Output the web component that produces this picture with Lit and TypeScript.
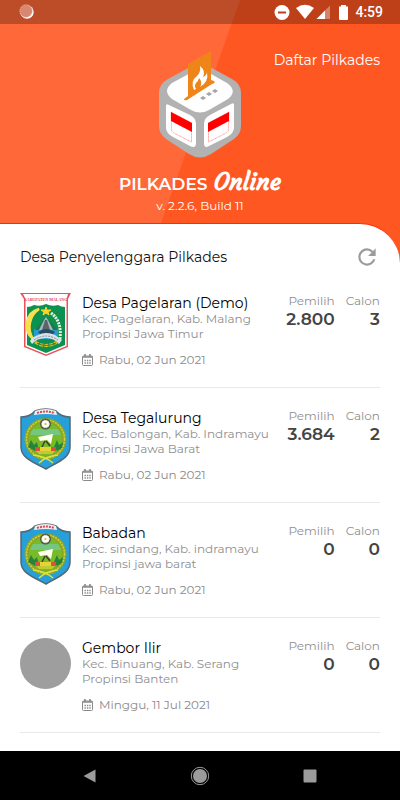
import { LitElement, html, css, svg } from "lit";
import { customElement, property } from "lit/decorators.js";

interface Village {
  name: string;
  district: string;
  province: string;
  date: string;
  voters: string;
  candidates: string;
  crest: "malang" | "indramayu" | "none";
}

const villages: Village[] = [
  { name: "Desa Pagelaran (Demo)", district: "Kec. Pagelaran, Kab. Malang", province: "Propinsi Jawa Timur", date: "Rabu, 02 Jun 2021", voters: "2.800", candidates: "3", crest: "malang" },
  { name: "Desa Tegalurung", district: "Kec. Balongan, Kab. Indramayu", province: "Propinsi Jawa Barat", date: "Rabu, 02 Jun 2021", voters: "3.684", candidates: "2", crest: "indramayu" },
  { name: "Babadan", district: "Kec. sindang, Kab. indramayu", province: "Propinsi jawa barat", date: "Rabu, 02 Jun 2021", voters: "0", candidates: "0", crest: "indramayu" },
  { name: "Gembor Ilir", district: "Kec. Binuang, Kab. Serang", province: "Propinsi Banten", date: "Minggu, 11 Jul 2021", voters: "0", candidates: "0", crest: "none" },
];

const fontStack = css`Montserrat, Inter, "Liberation Sans", sans-serif`;

const malangCrest = svg`
  <path d="M0 0H51L48 6V54L26 63L4 54V6Z" fill="#e8525a"/>
  <path d="M3 1H48L46.500 6V53L26 61.500L5.500 53V6Z" fill="#fff"/>
  <text x="25.500" y="8" text-anchor="middle" font-family="Liberation Serif, serif" font-weight="700" font-size="4" fill="#e0454f">KABUPATEN MALANG</text>
  <path d="M7 14Q11 14 14 12Q20 14 26 11Q32 14 38 12Q41 14 45 14V52L26 60L7 52Z" fill="#0d9150"/>
  <path d="M19 16A16 17 0 0 0 13 46A22 22 0 0 1 19 16Z" fill="#f6e04b" stroke="#f6e04b" stroke-width="2.500"/>
  <path d="M31 20Q42 28 40 46" fill="none" stroke="#e8f3e0" stroke-width="3" stroke-dasharray="2 1"/>
  <path d="M14 36H38V46H14Z" fill="#299bd2"/>
  <path d="M15 37L22 28L26 24L30 28L38 37Z" fill="#197b50"/>
  <path d="M26 24L28 27L33 37H19L24 27Z" fill="#aab9b8"/>
  <path d="M25 27H27L30 37H22Z" fill="#58666b"/>
  <path d="M18 39Q26 33 35 39L33 41H20Z" fill="#294b64"/>
  <path d="M26 14L27 17H31L28 19L29 22L26 20L23 22L24 19L21 17H25Z" fill="#ffd329" stroke="#ffd329"/>
  <path d="M10 48Q12 44 18 42Q26 38 35 42L42 47L39 51Q34 45 26 45Q17 45 12 51Z" fill="#dce2e9"/>
  <path d="M14 47Q26 39 38 47" fill="none" stroke="#858c9c" stroke-width="1" stroke-dasharray="2 1"/>
  <path d="M15 49Q26 56 37 49" fill="none" stroke="#d5bd24" stroke-width="3" stroke-dasharray="4 1"/>
  <path d="M17 50Q26 55 36 50" fill="none" stroke="#55752a" stroke-width="1"/>`;

const indramayuCrest = svg`
  <path d="M1 9Q10 9 15 3Q26 -1 36 3Q41 9 50 9V39C50 50 38 54 26 61C13 54 1 50 1 39Z" fill="#27a0da" stroke="#536775" stroke-width="1.500"/>
  <path d="M15 3Q26 -1 36 3L37 7Q26 5 14 7Z" fill="#edf0f0"/>
  <path d="M17 5Q26 2 34 5" fill="none" stroke="#d94a55" stroke-width="2" stroke-dasharray="2 1"/>
  <circle cx="25.500" cy="31" r="21" fill="#8fa522"/>
  <circle cx="25.500" cy="31" r="19" fill="none" stroke="#cfd23e" stroke-width="1.500" stroke-dasharray="2 1"/>
  <circle cx="25.500" cy="31" r="16.500" fill="#77bb28"/>
  <path d="M13 21H38Q40 24 41 27H10Q11 24 13 21Z" fill="#74c681"/>
  <circle cx="25.500" cy="16" r="5.500" fill="#4d5a45"/>
  <circle cx="25.500" cy="16" r="3.800" fill="#fff" stroke="#dfe4c0" stroke-dasharray="1 1"/>
  <circle cx="25.500" cy="16" r="1.200" fill="#d9c95a"/>
  <path d="M18 29L33 26L31 36L27 32L20 33Z" fill="#fffef0"/>
  <path d="M26 33L30 38M25 33L22 39" stroke="#473d23" stroke-width="1.500"/>
  <path d="M8 39L11 32L14 37L17 34L18 39L15 43ZM34 39L37 32L39 37L43 34L42 40L37 43Z" fill="#24853a"/>
  <path d="M15 39H36V43H15Z" fill="#e9d234"/>
  <path d="M15 39H20V43H15ZM31 39H36V43H31Z" fill="#db513a"/>
  <path d="M16 43H35L32 46H19Z" fill="#b8ce32"/>
  <path d="M13 47Q25 48 33 55M38 47Q26 48 19 55" fill="none" stroke="#dce440" stroke-width="1.500"/>`;

@customElement("village-row")
export class VillageRow extends LitElement {
  @property({ attribute: false }) village!: Village;

  static styles = css`
    :host { display: block; font-family: ${fontStack}; }
    .row { display: flex; gap: 11px; padding-bottom: 19px; border-bottom: 1px solid #e9e9e9; }
    .crest { flex: none; width: 51px; height: 64px; }
    .blank { flex: none; width: 51px; height: 51px; border-radius: 50%; background: #9e9e9e; }
    .info { flex: 1; min-width: 0; white-space: nowrap; }
    .name { margin: 0; padding-top: 2px; font-size: 14px; line-height: 16px; font-weight: 400; color: #000; }
    .place { margin: 0; font-size: 12px; line-height: 15px; color: #8f8f8f; }
    .date { display: flex; align-items: center; gap: 6px; margin: 10px 0 0; font-size: 12px; line-height: 17px; color: #8a8a8a; }
    .date svg { width: 11px; height: 12px; }
    .counts { display: flex; gap: 11px; margin: 0; text-align: right; }
    .label { font-size: 12px; line-height: 16px; color: #8f8f8f; }
    .value { margin: 0; font-size: 17px; line-height: 20px; font-weight: 600; color: #444; }
  `;

  render() {
    const v = this.village;
    return html`<article class="row">
      ${v.crest === "none"
        ? html`<div class="blank"></div>`
        : html`<svg class="crest" viewBox="0 0 51 64" aria-hidden="true">${v.crest === "malang" ? malangCrest : indramayuCrest}</svg>`}
      <div class="info">
        <h3 class="name">${v.name}</h3>
        <p class="place">${v.district}</p>
        <p class="place">${v.province}</p>
        <p class="date">
          <svg viewBox="0 0 11 12" aria-hidden="true">
            <path d="M1.500 2H9.500Q10.500 2 10.500 3V10.500Q10.500 11.500 9.500 11.500H1.500Q.5 11.500 .5 10.500V3Q.5 2 1.500 2Z" fill="none" stroke="#8a8a8a"/>
            <path d="M.5 3H10.500M3 0V2.500M8 0V2.500" fill="none" stroke="#8a8a8a" stroke-width="1.600"/>
            <path d="M2.500 6.500H8.700M2.500 9H8.700" stroke="#8a8a8a" stroke-width="1.400" stroke-dasharray="1.400 1"/>
          </svg>
          <time>${v.date}</time>
        </p>
      </div>
      <dl class="counts">
        <div><dt class="label">Pemilih</dt><dd class="value">${v.voters}</dd></div>
        <div><dt class="label">Calon</dt><dd class="value">${v.candidates}</dd></div>
      </dl>
    </article>`;
  }
}

@customElement("app-root")
export class AppRoot extends LitElement {
  static styles = css`
    :host { display: flex; flex-direction: column; min-height: 100vh; background: #fff; font-family: ${fontStack}; }
    .top { background: #ff5722; position: relative; }
    .shade { position: absolute; inset: 0; width: 100%; height: 100%; }
    .status { position: relative; display: flex; align-items: center; justify-content: space-between; height: 24px; padding: 0 17px 0 19px; background: rgba(0, 0, 0, 0.26); color: #fff; font: 500 14px/24px Roboto, sans-serif; }
    .status svg { display: block; }
    .signals { display: flex; align-items: center; gap: 7px; }
    .hero { position: relative; display: grid; grid-template-columns: 1fr 82px 1fr; padding: 26px 20px 0; }
    .list-link { grid-column: 3; justify-self: end; color: #fff; text-decoration: none; font-size: 14px; line-height: 20px; white-space: nowrap; }
    .logo { grid-column: 2; grid-row: 1; width: 82px; height: 108px; }
    .brand { position: relative; display: flex; justify-content: center; align-items: baseline; gap: 6px; margin: 11px 0 0; color: #fff; font-size: 17px; line-height: 26px; font-weight: 600; }
    .script { font: normal 700 24px/26px Courgette, "Kaushan Script", Pacifico, Lato, cursive; }
    .version { position: relative; margin: 0; padding: 1px 0 9px; color: #fff; text-align: center; font-size: 12px; line-height: 16px; }
    .corner { background: #ff5722; }
    .sheet { padding: 20px 20px 17px; background: #fff; border-radius: 0 40px 0 0; border-top: 1px solid #ff2a06; }
    .bar { display: flex; justify-content: space-between; align-items: center; }
    .heading { margin: 0; font-size: 14px; line-height: 24px; font-weight: 400; color: #111; }
    .refresh { border: 0; padding: 0; background: none; width: 26px; height: 26px; }
    .list { display: grid; gap: 20px; margin: 23px 0 0; padding: 0; list-style: none; }
    .nav { display: flex; justify-content: space-around; align-items: center; height: 49px; margin-top: auto; padding: 0 35px; background: #000; }
    .key { display: block; border: 0; padding: 0; width: 20px; height: 20px; background: none; }
    .key svg, .refresh svg { display: block; width: 100%; height: 100%; }
  `;

  render() {
    return html`
      <header class="top">
        <svg class="shade" viewBox="0 0 400 224" preserveAspectRatio="none" aria-hidden="true">
          <path d="M0 0H240L161 224H0Z" fill="#fff" fill-opacity=".1"/>
        </svg>
        <div class="status">
          <svg width="16" height="16" viewBox="0 0 16 16" aria-hidden="true">
            <circle cx="8" cy="8" r="6.700" fill="#fff"/>
            <circle cx="7" cy="7" r="6.200" fill="#d98770" stroke="#e6b1a2" stroke-dasharray="1 1"/>
          </svg>
          <div class="signals">
            <svg width="76" height="18" viewBox="272 3 76 18" aria-hidden="true">
              <circle cx="282" cy="12.500" r="7.500" fill="#fff"/>
              <path d="M278 11.500H286V13.500H278Z" fill="#b8421d"/>
              <path d="M296 8Q305 1.500 314 8L305 19Z" fill="#fff"/>
              <path d="M330 5.500V19H316.500Z" fill="#fff" fill-opacity=".35"/>
              <path d="M325 10.500V19H316.500Z" fill="#fff"/>
              <path d="M341 5H346V6.500H348V19Q348 20 347 20H340Q339 20 339 19V6.500H341Z" fill="#fff"/>
            </svg>
            <span>4:59</span>
          </div>
        </div>
        <div class="hero">
          <svg class="logo" viewBox="159 50 82 108" role="img" aria-label="Pilkades Online">
            <path d="M192 66Q200 62 208 66L232 79Q241 84 241 93V126Q241 134 234 139L211 154Q200 161 189 154L166 139Q159 134 159 126V93Q159 84 168 79Z" fill="#b2b2b2"/>
            <path d="M196 70Q200 68 204 70L227 83Q238 91 228 99L209 110Q200 115 191 110L172 99Q162 91 172 83Z" fill="#fff"/>
            <path d="M166 106Q166 103 169 105L190 115Q196 118 196 124V143Q196 149 190 146L173 137Q166 133 166 128Z" fill="#fff"/>
            <path d="M234 105Q234 102 231 104L210 115Q204 118 204 124V143Q204 149 209 146L227 137Q234 133 234 128Z" fill="#fff"/>
            <path d="M171 112L191.500 123V142L176 134Q171.500 132 171.500 129Z" fill="#fff" stroke="#ff6b66" stroke-width=".7" stroke-dasharray="1 .5"/>
            <path d="M229 112L208.500 123V142L224 134Q228.500 132 228.500 129Z" fill="#fff" stroke="#ff6b66" stroke-width=".7" stroke-dasharray="1 .5"/>
            <path d="M171 112L192 123V132L171 121ZM229 112L208 123V132L229 121Z" fill="#f00"/>
            <path d="M188 64L211 51V80L214 81Q216 83 212 84L187 100Q184 101 184 99L188 96Z" fill="#ef8519"/>
            <path d="M194 90Q190 81 197 76Q201 72 200 66Q206 71 203 77Q207 75 207 72Q209 82 200 87Q203 82 199 78Q198 82 196 83Q194 86 196 89Z" fill="#fff"/>
            <path d="M200 98L203 96L206 98L203 100ZM206 94L209 92L212 94L209 96ZM212 91L215 89L218 91L215 93Z" fill="#a5a5a5"/>
          </svg>
          <a class="list-link" href="#daftar">Daftar Pilkades</a>
        </div>
        <h1 class="brand">PILKADES <span class="script">Online</span></h1>
        <p class="version">v. 2.2.6, Build 11</p>
      </header>
      <div class="corner">
        <main class="sheet">
          <div class="bar">
            <h2 class="heading">Desa Penyelenggara Pilkades</h2>
            <button class="refresh" aria-label="Muat ulang">
              <svg viewBox="0 0 24 24"><path d="M17.650 6.350A7.960 7.960 0 0 0 12 4a8 8 0 1 0 7.730 10h-2.080A6 6 0 1 1 12 6c1.660 0 3.140.69 4.220 1.780L13 11h7V4z" fill="#9b9b9b"/></svg>
            </button>
          </div>
          <ul class="list">
            ${villages.map((v) => html`<li><village-row .village=${v}></village-row></li>`)}
          </ul>
        </main>
      </div>
      <nav class="nav">
        <button class="key" aria-label="Kembali"><svg viewBox="0 0 20 20"><path d="M3.500 10L15.500 3.500V16.500Z" fill="#9b9b9b"/></svg></button>
        <button class="key" aria-label="Beranda"><svg viewBox="0 0 20 20"><circle cx="10" cy="10" r="8.700" fill="none" stroke="#9b9b9b"/><circle cx="10" cy="10" r="7" fill="#9b9b9b"/></svg></button>
        <button class="key" aria-label="Terkini"><svg viewBox="0 0 20 20"><rect x="3.500" y="3.500" width="13" height="13" rx="1" fill="#9b9b9b"/></svg></button>
      </nav>
    `;
  }
}
